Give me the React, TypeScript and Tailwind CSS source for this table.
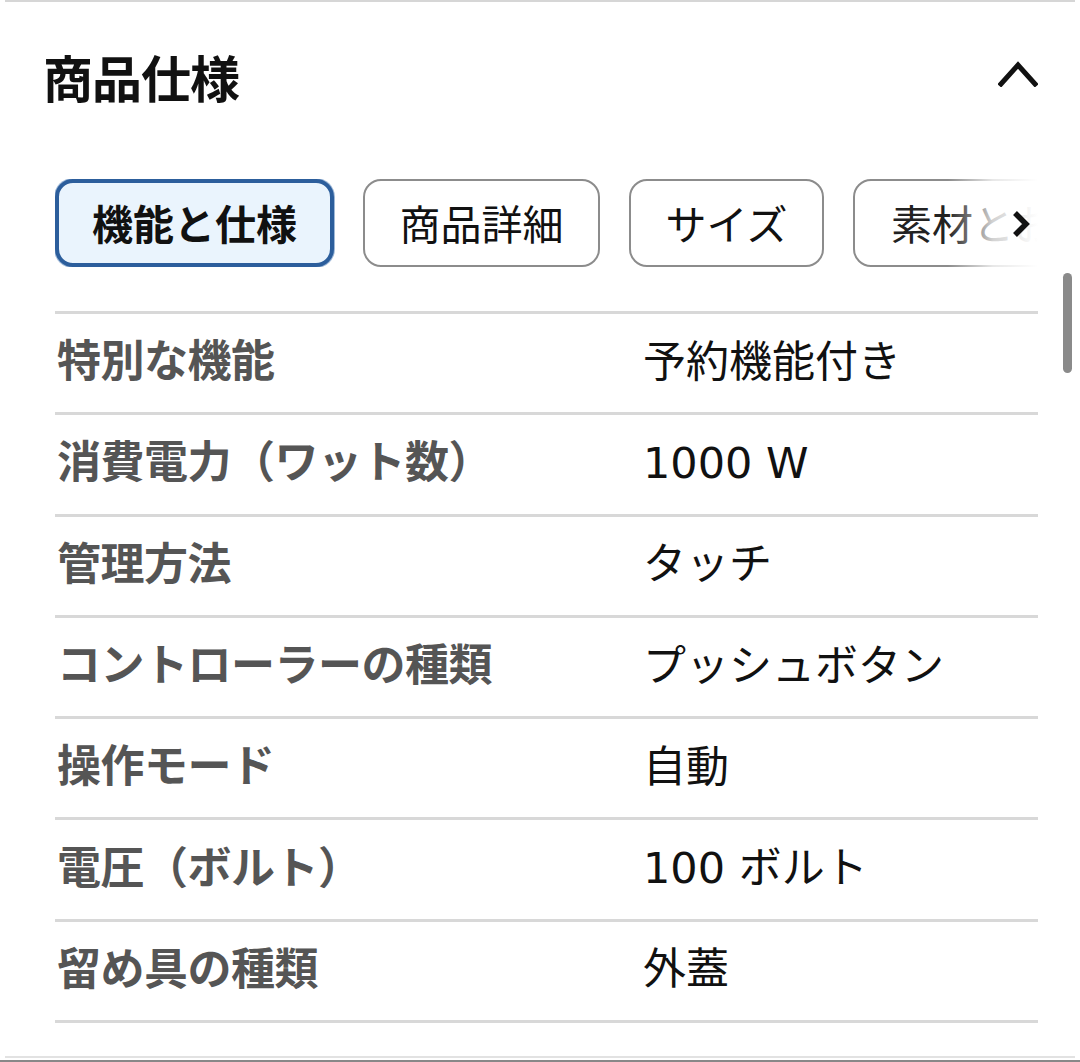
import React from "react";

const rows: [string, string][] = [
  ["特別な機能", "予約機能付き"],
  ["消費電力（ワット数）", "1000 W"],
  ["管理方法", "タッチ"],
  ["コントローラーの種類", "プッシュボタン"],
  ["操作モード", "自動"],
  ["電圧（ボルト）", "100 ボルト"],
  ["留め具の種類", "外蓋"],
];

const font = { fontFamily: '"Noto Sans CJK JP", "Noto Sans", sans-serif' };
const valueFont = { fontFamily: '"DejaVu Sans", "Noto Sans CJK JP", sans-serif' };

export default function App() {
  return (
    <div className="relative w-[1080px] h-[1062px] bg-white overflow-hidden" style={font}>
      <div className="mx-[5px] h-[2px] bg-[#d6d6d6]" />
      <div className="flex items-center justify-between pl-[43px] pr-[42px] h-[150px] pb-[2px]">
        <h2 className="text-[50px] font-bold text-[#111] leading-none tracking-[-1px]">商品仕様</h2>
        <svg width="40" height="28" viewBox="0 0 40 28" className="mt-[-6px]">
          <path d="M3 25 L20 6 L37 25" fill="none" stroke="#111" strokeWidth="5" strokeLinecap="square" />
        </svg>
      </div>
      <div className="relative ml-[55px] mr-[42px] mt-[27px] h-[88px] overflow-hidden">
        <div className="flex gap-[29px] w-[1200px]">
          <div className="w-[279px] h-[88px] rounded-[18px] border-[4px] border-[#2c5e9c] bg-[#eaf4fd] flex items-center justify-center text-[41px] font-bold text-[#111] shadow-[0_0_0_1px_#9fb9d8]">
            機能と仕様
          </div>
          <div className="w-[237px] h-[88px] rounded-[18px] border-[2px] border-[#8c8c8c] flex items-center justify-center text-[41px] text-[#111]">
            商品詳細
          </div>
          <div className="w-[195px] h-[88px] rounded-[18px] border-[2px] border-[#8c8c8c] flex items-center justify-center text-[41px] text-[#111]">
            サイズ
          </div>
          <div className="w-[300px] h-[88px] rounded-[18px] border-[2px] border-[#8c8c8c] flex items-center pl-[36px] text-[41px] text-[#222] whitespace-nowrap">
            素材とお手入れ
          </div>
        </div>
        <div className="absolute right-0 top-0 h-full w-[90px] bg-gradient-to-r from-white/0 via-white/80 to-white" />
        <svg className="absolute right-[7px] top-[31px]" width="20" height="28" viewBox="0 0 20 28">
          <path d="M4 3 L15 14 L4 25" fill="none" stroke="#111" strokeWidth="5.5" />
        </svg>
      </div>
      <div className="absolute left-[1063px] top-[273px] w-[9px] h-[100px] rounded-full bg-[#8a8a8a]" />
      <div className="ml-[55px] mr-[42px] mt-[44px] border-t-[3px] border-[#d8d8d8]">
        {rows.map(([k, v]) => (
          <div key={k} className="flex items-center h-[101.3px] border-b-[3px] border-[#d8d8d8] pb-[2px]">
            <div className="w-[588px] pl-[2px] mb-[8px] text-[44px] font-bold text-[#555] leading-none tracking-[-0.5px] whitespace-nowrap">{k}</div>
            <div className="text-[43px] text-[#111] leading-none whitespace-nowrap" style={valueFont}>{v}</div>
          </div>
        ))}
      </div>
      <div className="absolute left-[5px] right-[5px] top-[1056px] h-[2px] bg-[#e2e2e2]" />
      <div className="absolute left-0 right-0 top-[1060px] h-[2px] bg-[#888]" />
    </div>
  );
}
